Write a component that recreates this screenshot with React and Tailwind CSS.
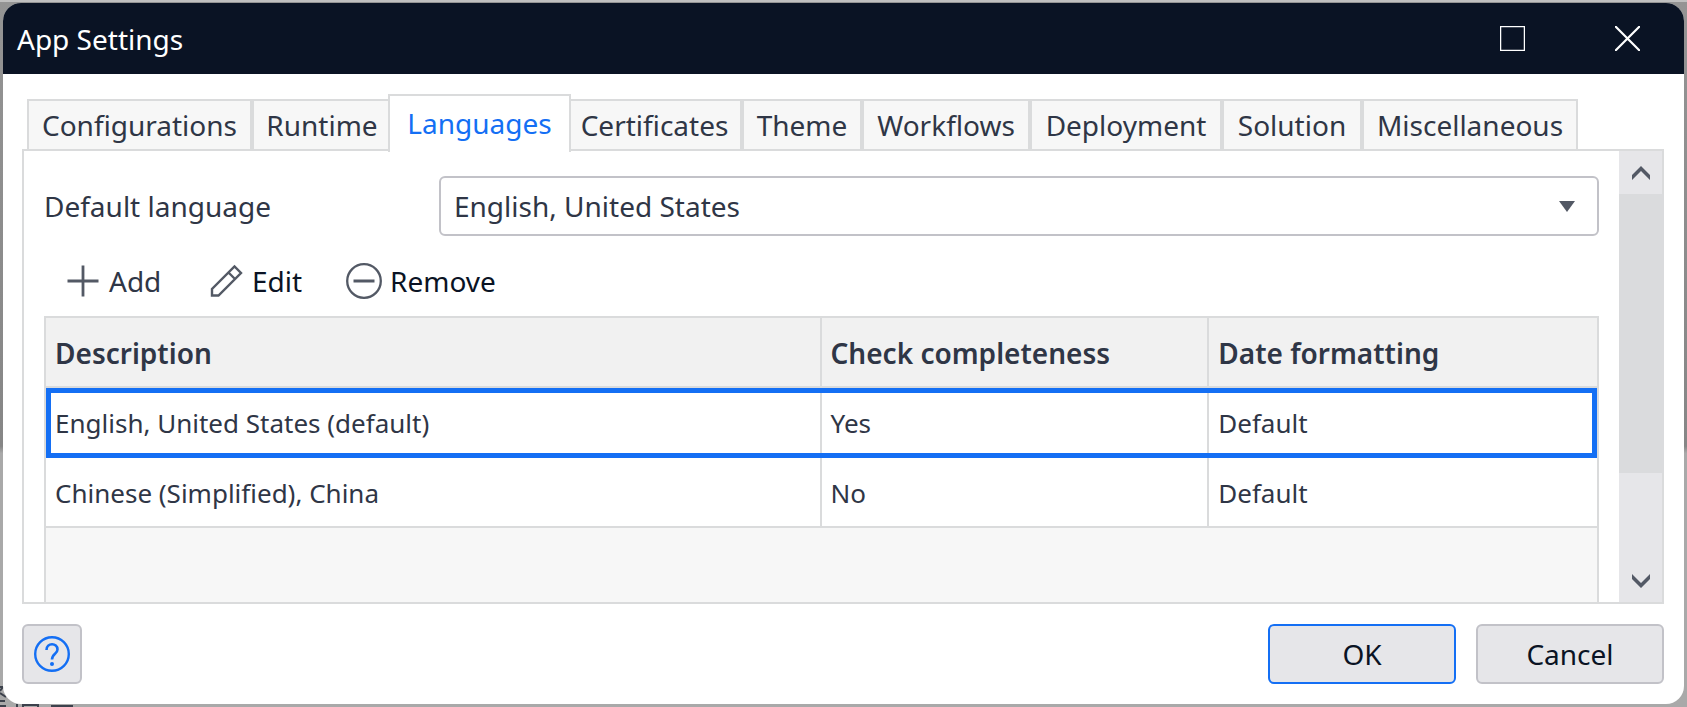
const tabs = [
  ["Configurations", "w-[225px]"],
  ["Runtime", "w-[140px]"],
  ["Languages", "w-[183px]"],
  ["Certificates", "w-[175px]"],
  ["Theme", "w-[120px]"],
  ["Workflows", "w-[168px]"],
  ["Deployment", "w-[192px]"],
  ["Solution", "w-[140px]"],
  ["Miscellaneous", "w-[216px]"],
];

const rows = [
  ["English, United States (default)", "Yes", "Default"],
  ["Chinese (Simplified), China", "No", "Default"],
];

function Tab({ label, width, active }) {
  return (
    <button
      type="button"
      role="tab"
      aria-selected={active}
      className={
        active
          ? `${width} relative z-10 -mx-1 -mb-[3px] h-[58px] shrink-0 border-2 border-b-0 border-[#dadbdc] bg-white pb-0.5 text-[#146ff4]`
          : `${width} h-[50px] shrink-0 border-2 border-b-0 border-[#dadbdc] bg-[#f7f7f7] text-[#2f3646]`
      }
    >
      {label}
    </button>
  );
}

function Chevron({ down }) {
  return (
    <svg viewBox="0 0 18 14" className="h-[14px] w-[18px]" aria-hidden="true">
      <path
        d={down ? "M0 0L9 9L18 0V5L9 14L0 5Z" : "M0 14L9 5L18 14V9L9 0L0 9Z"}
        fill="#535965"
      />
    </svg>
  );
}

export default function App() {
  return (
    <div className="relative flex min-h-screen flex-col border-t-2 border-[#c0c0c0] bg-linear-to-b from-[#949494] from-0% via-[#868686] via-63% to-[#a9a9a9] to-64% px-[3px] pb-[3px] pt-px font-['Noto_Sans',sans-serif] text-[28px] leading-[38px] text-[#2f3646]">
      <svg
        viewBox="0 0 75 22"
        className="absolute bottom-0 left-0 h-[22px] w-[75px]"
        fill="none"
        stroke="#3c414c"
        strokeWidth="2"
        aria-hidden="true"
      >
        <path d="M0 2H3L0 6M0 8L6 12M0 16H5M0 21H6M17 19V22M23 22V20H38V22M51 21H73" />
      </svg>
      <div className="relative flex flex-1 flex-col overflow-hidden rounded-[18px] bg-white">
        <header className="flex h-[71px] items-center justify-between bg-[#0a1324] pl-[14px] pr-11 text-white">
          <h1>App Settings</h1>
          <div className="flex gap-[90px]">
            <button type="button" aria-label="Maximize">
              <svg viewBox="0 0 25 25" className="size-[25px]" fill="none" stroke="currentColor">
                <rect x=".6" y=".6" width="23.800" height="23.800" strokeWidth="1.3" />
              </svg>
            </button>
            <button type="button" aria-label="Close">
              <svg viewBox="0 0 25 25" className="size-[25px]" fill="none" stroke="currentColor">
                <path d="M0 0L25 25M25 0L0 25" strokeWidth="2.200" />
              </svg>
            </button>
          </div>
        </header>

        <main className="flex flex-1 flex-col pb-5 pl-[19px] pr-5 pt-5">
          <div role="tablist" className="flex items-end pl-[5px]">
            {tabs.map(([label, width]) => (
              <Tab key={label} label={label} width={width} active={label === "Languages"} />
            ))}
          </div>

          <section className="flex flex-1 border-2 border-[#dadbdc]">
            <div className="flex min-w-0 flex-1 flex-col px-5 pt-[25px]">
              <div className="flex items-center">
                <label htmlFor="default-language" className="w-[395px]">
                  Default language
                </label>
                <div className="relative flex-1">
                  <select
                    id="default-language"
                    className="h-[60px] w-full appearance-none rounded-md border-2 border-[#c2c2c8] bg-white px-[13px]"
                  >
                    <option>English, United States</option>
                    <option>Chinese (Simplified), China</option>
                  </select>
                  <svg
                    viewBox="0 0 16 11"
                    className="pointer-events-none absolute right-6 top-[25px] h-[11px] w-4"
                    aria-hidden="true"
                  >
                    <path d="M0 0H16L8 11Z" fill="#535965" />
                  </svg>
                </div>
              </div>

              <div className="flex h-20 items-center pl-[22px] pt-[10px]">
                <button type="button" className="flex w-[143px] items-center gap-[9px]">
                  <svg viewBox="0 0 34 36" className="h-9 w-[34px]" fill="none" stroke="#535965" strokeWidth="2.8">
                    <path d="M17 2.500V33.500M1.500 18H32.500" />
                  </svg>
                  Add
                </button>
                <button type="button" className="flex w-[137px] items-center gap-[9px] text-[#0a1324]">
                  <svg viewBox="0 0 34 36" className="h-9 w-[34px]" fill="none" stroke="#535965" strokeWidth="2.4">
                    <path d="M3 32.500V26L25.500 3.500L32 10L9.500 32.500ZM19.500 9.500L26 16" />
                  </svg>
                  Edit
                </button>
                <button type="button" className="flex items-center gap-2 text-[#0a1324]">
                  <svg viewBox="0 0 36 36" className="size-9" fill="none" stroke="#535965">
                    <circle cx="18" cy="18" r="16.800" strokeWidth="2.3" />
                    <path d="M7.500 18H28.500" strokeWidth="3" />
                  </svg>
                  Remove
                </button>
              </div>

              <div className="flex-1 border-2 border-b-0 border-[#dadbdc] bg-[#f7f7f7]">
                <table className="w-full table-fixed border-separate border-spacing-0 text-left">
                  <colgroup>
                    <col className="w-1/2" />
                    <col className="w-1/4" />
                    <col className="w-1/4" />
                  </colgroup>
                  <thead>
                    <tr className="h-[70px] bg-[#f1f1f1]">
                      {["Description", "Check completeness", "Date formatting"].map((h) => (
                        <th
                          key={h}
                          className="border-b-2 border-r-2 border-[#dadbdc] pb-0 pl-[9px] pt-0.5 font-semibold last:border-r-0"
                        >
                          {h}
                        </th>
                      ))}
                    </tr>
                  </thead>
                  <tbody className="text-[26px]">
                    {rows.map((row, i) => (
                      <tr
                        key={row[0]}
                        className={
                          i === 0
                            ? "h-[70px] bg-white outline-[5px] -outline-offset-[5px] outline-[#146ff4]"
                            : "h-[70px] bg-white"
                        }
                      >
                        {row.map((cell, j) => (
                          <td
                            key={j}
                            className="border-b-2 border-r-2 border-[#dadbdc] pb-0 pl-[9px] pt-0.5 last:border-r-0"
                          >
                            {cell}
                          </td>
                        ))}
                      </tr>
                    ))}
                  </tbody>
                </table>
              </div>
            </div>

            <div className="flex w-[43px] flex-col bg-[#e6e6e9]">
              <button type="button" aria-label="Scroll up" className="flex h-[43px] items-center justify-center">
                <Chevron />
              </button>
              <div className="-mr-0.5 h-[279px] bg-[#dadbdd]" />
              <div className="flex-1" />
              <button type="button" aria-label="Scroll down" className="flex h-[43px] items-center justify-center">
                <Chevron down />
              </button>
            </div>
          </section>

          <footer className="flex gap-5 pt-5 text-[#0a1324]">
            <button
              type="button"
              aria-label="Help"
              className="mr-auto flex size-[60px] items-center justify-center rounded-md border-2 border-[#c2c2c8] bg-[#e6e6e9]"
            >
              <svg viewBox="0 0 36 36" className="size-9" fill="none" stroke="#146ff4">
                <circle cx="18" cy="18" r="16.800" strokeWidth="2.400" />
                <path d="M12.500 14C12.500 6.500 23.500 6.500 23.500 13.500C23.500 18 18 17.500 18 23.500" strokeWidth="2.600" />
                <circle cx="18" cy="28" r="2" fill="#146ff4" stroke="none" />
              </svg>
            </button>
            <button type="button" className="h-[60px] w-[188px] rounded-md border-2 border-[#146ff4] bg-[#e6e6e9]">
              OK
            </button>
            <button type="button" className="h-[60px] w-[188px] rounded-md border-2 border-[#c2c2c8] bg-[#e6e6e9]">
              Cancel
            </button>
          </footer>
        </main>
      </div>
    </div>
  );
}
